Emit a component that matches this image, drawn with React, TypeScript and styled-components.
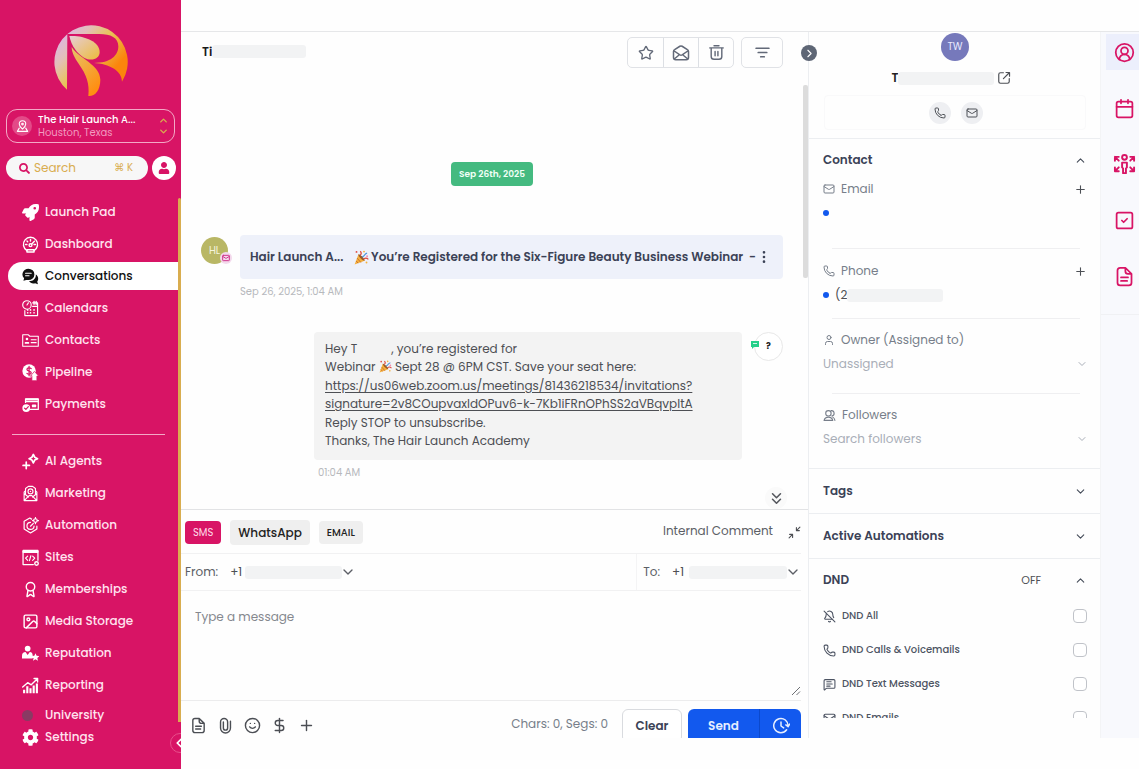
import React from "react";
import styled, { createGlobalStyle, css } from "styled-components";
import {
  Award, BellOff, Calendar, ChevronDown, ChevronLeft, ChevronRight, ChevronUp, ChevronsDown, CircleUserRound,
  DollarSign, EllipsisVertical, Image as ImageIcon, Mail, MessageSquareText,
  Phone, Plus, Smile, SquareCheck, Star, User,
} from "lucide-react";
import { FaRocket, FaSearch, FaUser, FaCog } from "react-icons/fa";

const c = {
  brand: "#d81465",
  gold: "#d9ad4f",
  ink: "#3b4256",
  text: "#4d4f54",
  muted: "#777e8a",
  faint: "#a9aeb8",
  line: "#eceef1",
  redact: "#f2f3f4",
  blue: "#1259ee",
};

const Global = createGlobalStyle`
  *, *::before, *::after { box-sizing: border-box; }
  body { margin: 0; background: #fefefe; }
  body, button, input, select, textarea { font-family: Poppins, Inter, "Liberation Sans", sans-serif; }
  button { cursor: pointer; }
  h2, p { margin: 0; }
`;

const Shell = styled.div`
  display: flex;
  height: 100vh;
  overflow: hidden;
  color: ${c.text};
`;

/* ---------- sidebar ---------- */

const Sidebar = styled.aside`
  position: relative;
  flex: 0 0 181px;
  display: flex;
  flex-direction: column;
  background: ${c.brand};
  overflow: hidden;
`;

const LogoArea = styled.div`
  display: flex;
  justify-content: center;
  padding: 23px 2px 11px 0;
`;

const Account = styled.button`
  display: flex;
  align-items: center;
  gap: 6px;
  height: 34px;
  margin: 0 6px;
  padding: 0 5px;
  border: 1px solid #f3a9c6;
  border-radius: 11px;
  background: transparent;
  color: #fff;
  text-align: left;
`;

const AccountIcon = styled.span`
  display: grid;
  place-items: center;
  width: 20px;
  height: 20px;
  border-radius: 50%;
  background: #e34a88;
`;

const AccountText = styled.span`
  flex: 1;
  display: flex;
  flex-direction: column;
  font-size: 10px;
  font-weight: 500;
  line-height: 13px;
  white-space: nowrap;
`;

const AccountPlace = styled.span`
  color: #f29cc0;
  font-weight: 400;
`;

const Sorter = styled.span`
  display: flex;
  flex-direction: column;
  color: ${c.gold};
`;

const SearchRow = styled.div`
  display: flex;
  gap: 4px;
  margin: 13px 5px 0 6px;
`;

const SearchBox = styled.label`
  flex: 1;
  min-width: 0;
  display: flex;
  align-items: center;
  gap: 4px;
  height: 24px;
  padding: 0 15px 0 13px;
  border-radius: 12px;
  background: #f7f7f7;
  color: ${c.brand};
`;

const SearchInput = styled.input`
  flex: 1;
  min-width: 0;
  padding: 0;
  border: 0;
  outline: 0;
  background: transparent;
  font-size: 12px;
  &::placeholder { color: ${c.gold}; opacity: 1; }
`;

const Shortcut = styled.span`
  color: ${c.gold};
  font-size: 10px;
`;

const ProfileButton = styled.button`
  display: grid;
  place-items: center;
  width: 24px;
  height: 24px;
  padding: 0;
  border: 0;
  border-radius: 50%;
  background: #fff;
  color: ${c.brand};
`;

const Nav = styled.nav<{ $top: number; $gap?: number }>`
  display: flex;
  flex-direction: column;
  gap: ${(p) => p.$gap ?? 4}px;
  margin-top: ${(p) => p.$top}px;
  padding-left: 8px;
`;

const NavItem = styled.a<{ $active?: boolean; $short?: boolean }>`
  display: flex;
  align-items: center;
  gap: 6px;
  height: ${(p) => (p.$short ? 22 : 28)}px;
  padding-left: 14px;
  border-radius: 14px 0 0 14px;
  color: #ffe3ef;
  font-size: 12px;
  font-weight: 500;
  text-decoration: none;
  ${(p) => p.$active && css`background: #fff; color: #111;`}
  svg { flex: none; width: 17px; height: 17px; color: ${(p) => (p.$active ? "#111" : "#fff")}; }
`;

const NavRule = styled.hr`
  width: 153px;
  height: 1px;
  margin: 16px 0 0 12px;
  border: 0;
  background: #f3a9c6;
`;

const Dot = styled.span<{ $size: number; $color: string }>`
  flex: none;
  width: ${(p) => p.$size}px;
  height: ${(p) => p.$size}px;
  border-radius: 50%;
  background: ${(p) => p.$color};
`;

const DotSlot = styled.span`
  width: 17px;
  display: flex;
`;

const SideStripe = styled.div`
  position: absolute;
  right: 0;
  top: 198px;
  bottom: 47px;
  width: 3px;
  border-radius: 2px 2px 0 0;
  background: ${c.gold};
`;

const CollapseButton = styled.button`
  position: absolute;
  right: -9px;
  bottom: 16px;
  display: grid;
  place-items: center;
  width: 20px;
  height: 20px;
  padding: 0 2px 0 0;
  border: 1px solid #e8508c;
  border-radius: 50%;
  background: ${c.brand};
  color: #fff;
`;

/* ---------- workspace ---------- */

const Workspace = styled.main`
  position: relative;
  flex: 1;
  min-width: 0;
  display: flex;
  margin: 31px 0;
  border-top: 1px solid #e6e7e9;
  overflow: hidden;
`;

const Conversation = styled.section`
  position: relative;
  flex: 1;
  min-width: 0;
  display: flex;
  flex-direction: column;
`;

const Header = styled.header`
  display: flex;
  align-items: flex-start;
  height: 53px;
  padding: 5px 25px 0 21px;
`;

const ContactName = styled.div`
  flex: 1;
  display: flex;
  align-items: center;
  height: 29px;
  color: #1a1a1a;
  font-size: 12px;
  font-weight: 600;
`;

const Redacted = styled.span<{ $w: number; $h?: number }>`
  display: block;
  width: ${(p) => p.$w}px;
  height: ${(p) => p.$h ?? 13}px;
  border-radius: 3px;
  background: ${c.redact};
`;

const ButtonGroup = styled.div`
  display: flex;
  margin-right: 7px;
  border: 1px solid #e0e2e6;
  border-radius: 5px;
`;

const ToolButton = styled.button<{ $solo?: boolean }>`
  display: grid;
  place-items: center;
  width: ${(p) => (p.$solo ? 42 : 35)}px;
  height: ${(p) => (p.$solo ? 31 : 29)}px;
  padding: 0;
  border: 0;
  background: transparent;
  color: #626978;
  & + & { border-left: 1px solid #dcdfe4; }
  ${(p) => p.$solo && css`border: 1px solid #e0e2e6; border-radius: 5px;`}
`;

const Messages = styled.div`
  position: relative;
  flex: 1;
  min-height: 0;
  overflow: hidden;
  padding: 77px 25px 0 20px;
`;

const ScrollThumb = styled.div`
  position: absolute;
  top: 0;
  right: 0;
  width: 5px;
  height: 193px;
  border-radius: 2px;
  background: #dcdcdc;
`;

const DayBadge = styled.div`
  display: flex;
  align-items: center;
  justify-content: center;
  width: 82px;
  height: 24px;
  margin: 0 auto 49px;
  border-radius: 4px;
  background: #44ba80;
  color: #f1fff7;
  font-size: 9px;
  font-weight: 600;
  white-space: nowrap;
`;

const Row = styled.div<{ $end?: boolean }>`
  display: flex;
  align-items: flex-start;
  justify-content: ${(p) => (p.$end ? "flex-end" : "flex-start")};
  gap: 12px;
`;

const Avatar = styled.div`
  position: relative;
  flex: none;
  display: grid;
  place-items: center;
  width: 27px;
  height: 27px;
  margin-top: 2px;
  border-radius: 50%;
  background: #b9b765;
  color: #f4f4de;
  font-size: 10px;
`;

const AvatarBadge = styled.span`
  position: absolute;
  right: -4px;
  bottom: 0;
  display: grid;
  place-items: center;
  width: 12px;
  height: 12px;
  border-radius: 50%;
  background: #f3d9ec;
  color: #d0358d;
`;

const Stack = styled.div<{ $w?: number }>`
  ${(p) => (p.$w ? css`flex: 0 1 ${p.$w}px;` : css`flex: 1;`)}
  min-width: 0;
`;

const EmailCard = styled.div`
  display: flex;
  align-items: center;
  height: 44px;
  padding: 0 11px 0 10px;
  border-radius: 4px;
  background: #eef1fa;
  color: ${c.ink};
  font-size: 12px;
  font-weight: 600;
  white-space: nowrap;
`;

const Sender = styled.span`
  flex: 0 0 104px;
`;

const Subject = styled.span`
  flex: 1;
  display: flex;
  align-items: center;
  gap: 2px;
`;

const PlainIcon = styled.button`
  display: grid;
  place-items: center;
  padding: 0;
  border: 0;
  background: transparent;
  color: inherit;
`;

const Stamp = styled.div<{ $indent?: boolean }>`
  margin-top: 6px;
  padding-left: ${(p) => (p.$indent ? 4 : 0)}px;
  color: #b7b9bd;
  font-size: 10px;
  line-height: 14px;
`;

const Spacer = styled.div<{ $h: number }>`
  height: ${(p) => p.$h}px;
`;

const Bubble = styled.div`
  display: flex;
  flex-direction: column;
  gap: 1px;
  padding: 8px 12px 10px 11px;
  border-radius: 4px;
  background: #f3f3f3;
  color: ${c.text};
  font-size: 12px;
  line-height: 18px;
  white-space: nowrap;
  a { color: inherit; text-underline-offset: 2px; }
  svg { vertical-align: -2px; }
`;

const NameGap = styled.span`
  display: inline-block;
  width: 34px;
`;

const AskAvatar = styled.div`
  position: relative;
  flex: none;
  display: grid;
  place-items: center;
  width: 29px;
  height: 29px;
  border: 1px solid #e8e8e8;
  border-radius: 50%;
  background: #fff;
  color: #222;
  font-size: 9px;
  font-weight: 700;
  svg { position: absolute; left: -5px; top: 7px; }
`;

const JumpDown = styled.button`
  position: absolute;
  right: 21px;
  bottom: 0;
  display: grid;
  place-items: center;
  width: 22px;
  height: 22px;
  padding: 0;
  border: 0;
  border-radius: 50%;
  background: #fafafa;
  color: #55585e;
`;

/* ---------- composer ---------- */

const Composer = styled.form`
  flex: none;
  border-top: 1px solid #e2e3e5;
`;

const ComposerRow = styled.div<{ $h: number; $top?: number }>`
  display: flex;
  align-items: center;
  height: ${(p) => p.$h}px;
  margin-right: 7px;
  padding: ${(p) => p.$top ?? 0}px 0 0 4px;
  border-bottom: 1px solid #f1f1f2;
  white-space: nowrap;
`;

const Channel = styled.button<{ $active?: boolean; $large?: boolean }>`
  height: ${(p) => (p.$large ? 25 : 23)}px;
  margin-right: 9px;
  padding: 0 8px;
  border: 0;
  border-radius: 4px;
  background: ${(p) => (p.$active ? c.brand : "#efefef")};
  color: ${(p) => (p.$active ? "#ffd9e8" : "#222")};
  font-size: ${(p) => (p.$large ? 12 : 10)}px;
  font-weight: ${(p) => (p.$active ? 400 : 500)};
`;

const CommentLink = styled.button`
  margin: 0 15px 0 auto;
  padding: 0 0 4px;
  border: 0;
  background: transparent;
  color: #5c5f66;
  font-size: 12px;
`;

const NumberField = styled.label<{ $end?: boolean }>`
  display: flex;
  align-items: center;
  gap: 12px;
  height: 100%;
  font-size: 12px;
  color: #5c5f66;
  ${(p) => p.$end && css`margin-left: auto; padding-left: 6px; border-left: 1px solid #f4f4f5;`}
`;

const SelectWrap = styled.span<{ $w?: number }>`
  position: relative;
  display: flex;
  align-items: center;
  ${(p) => (p.$w ? css`width: ${p.$w}px;` : css`width: 100%;`)}
  svg { position: absolute; right: 0; pointer-events: none; }
`;

const Select = styled.select<{ $muted?: boolean }>`
  width: 100%;
  padding: 0;
  border: 0;
  outline: 0;
  appearance: none;
  background: transparent;
  color: ${(p) => (p.$muted ? c.faint : c.text)};
  font-size: 12px;
  line-height: 18px;
`;

const SelectMask = styled(Redacted)`
  position: absolute;
  right: 14px;
  pointer-events: none;
`;

const MessageBox = styled.textarea`
  display: block;
  width: 100%;
  height: 109px;
  padding: 17px 14px;
  border: 0;
  outline: 0;
  resize: none;
  background: transparent;
  font-size: 12px;
  line-height: 18px;
  &::placeholder { color: #85888e; opacity: 1; }
`;

const MessageBoxWrap = styled.div`
  position: relative;
  margin-right: 7px;
  border-bottom: 1px solid #ececed;
  svg { position: absolute; right: 0; bottom: 4px; }
`;

const Actions = styled.div`
  display: flex;
  align-items: flex-start;
  height: 37px;
  padding: 8px 7px 0 9px;
  overflow: hidden;
`;

const ActionIcons = styled.div`
  display: flex;
  gap: 10px;
  padding-top: 8px;
  color: #4b4e54;
`;

const Counter = styled.span`
  margin: 6px 14px 0 auto;
  color: ${c.muted};
  font-size: 12px;
  line-height: 18px;
`;

const ClearButton = styled.button`
  width: 60px;
  height: 34px;
  margin-right: 6px;
  border: 1px solid #d9dbdf;
  border-radius: 6px;
  background: #fff;
  color: ${c.ink};
  font-size: 12px;
  font-weight: 600;
`;

const SendGroup = styled.div`
  display: flex;
  border-radius: 6px;
  overflow: hidden;
`;

const SendButton = styled.button<{ $w: number }>`
  display: grid;
  place-items: center;
  width: ${(p) => p.$w}px;
  height: 34px;
  padding: 0;
  border: 0;
  background: ${c.blue};
  color: #e6eeff;
  font-size: 12px;
  font-weight: 600;
  & + & { border-left: 1px solid #0b49cd; }
`;

/* ---------- contact panel ---------- */

const Panel = styled.aside`
  position: relative;
  flex: 0 0 293px;
  display: flex;
  flex-direction: column;
  border-left: 1px solid ${c.line};
  border-right: 1px solid #f3f4f6;
`;

const PanelScroll = styled.div`
  flex: 1;
  min-height: 0;
  margin-bottom: 20px;
  overflow: hidden;
`;

const PanelToggle = styled.button`
  position: absolute;
  left: -8px;
  top: 13px;
  display: grid;
  place-items: center;
  width: 16px;
  height: 16px;
  padding: 0;
  border: 0;
  border-radius: 50%;
  background: #5e6675;
  color: #fff;
`;

const Summary = styled.div`
  display: flex;
  flex-direction: column;
  align-items: center;
  height: 106px;
  padding: 1px 14px 0 15px;
`;

const Initials = styled.div`
  display: grid;
  place-items: center;
  width: 28px;
  height: 28px;
  border-radius: 50%;
  background: #7679bb;
  color: #e9eaff;
  font-size: 10px;
`;

const NameRow = styled.div`
  display: flex;
  align-items: center;
  height: 34px;
  padding-right: 7px;
  color: #222;
  font-size: 12px;
  font-weight: 600;
  svg { margin-left: 3px; color: #4d5056; }
`;

const ContactActions = styled.div`
  display: flex;
  justify-content: center;
  align-items: center;
  gap: 10px;
  width: 100%;
  height: 35px;
  padding-left: 2px;
  border: 1px solid #f9f9fa;
  border-radius: 4px;
`;

const RoundButton = styled.button`
  display: grid;
  place-items: center;
  width: 22px;
  height: 22px;
  padding: 0;
  border: 0;
  border-radius: 50%;
  background: #eeeff2;
  color: #4d5056;
`;

const Section = styled.section`
  padding: 0 12px 0 14px;
  border-top: 1px solid ${c.line};
`;

const SectionHead = styled.div<{ $open?: boolean }>`
  display: flex;
  align-items: center;
  justify-content: space-between;
  height: ${(p) => (p.$open ? 38 : 44)}px;
  padding: ${(p) => (p.$open ? 4 : 0)}px 1px 0 0;
  color: #444b58;
`;

const SectionTitle = styled.h2`
  flex: 1;
  color: ${c.ink};
  font-size: 12px;
  font-weight: 600;
`;

const State = styled.span`
  margin-right: 33px;
  color: ${c.text};
  font-size: 11px;
`;

const Field = styled.div<{ $h: number; $last?: boolean }>`
  position: relative;
  height: ${(p) => p.$h}px;
  font-size: 12px;
  &::after {
    content: ${(p) => (p.$last ? "none" : '""')};
    position: absolute;
    left: 9px;
    right: 8px;
    bottom: 0;
    border-bottom: 1px solid #efeff1;
  }
`;

const FieldHead = styled.div`
  display: flex;
  align-items: center;
  gap: 6px;
  height: 24px;
  padding-right: 1px;
  color: ${c.muted};
  & > :nth-child(2) { flex: 1; }
  button { color: #4d5056; }
`;

const FieldValue = styled.div`
  display: flex;
  align-items: center;
  height: 24px;
`;

const ValueText = styled.span`
  padding-left: 6px;
`;

const DndList = styled.div`
  padding-top: 2px;
`;

const DndRow = styled.label`
  display: flex;
  align-items: center;
  gap: 6px;
  height: 34px;
  color: #4d5463;
  font-size: 10px;
  font-weight: 500;
`;

const Tick = styled.input`
  width: 14px;
  height: 14px;
  margin: 0 1px 0 auto;
  appearance: none;
  border: 1px solid #c0c3c9;
  border-radius: 4px;
  background: #fff;
  &:checked { background: ${c.blue}; }
`;

/* ---------- right rail ---------- */

const Rail = styled.nav`
  flex: 0 0 38px;
  background: #f8f9fd;
`;

const RailGroup = styled.div`
  display: flex;
  flex-direction: column;
  gap: 20px;
  padding: 2px 0 20px 5px;
  border-bottom: 1px solid #f0f1f4;
`;

const RailButton = styled.button<{ $active?: boolean }>`
  display: grid;
  place-items: center;
  height: 36px;
  padding: 0 0 0 4px;
  border: 0;
  background: ${(p) => (p.$active ? "#eceffc" : "transparent")};
  color: ${c.brand};
`;

/* ---------- drawings ---------- */

const Logo = () => (
  <svg width="76" height="75" viewBox="158 68 228 225" role="img" aria-label="R logo">
    <defs>
      <linearGradient id="logo" gradientUnits="userSpaceOnUse" x1="190" y1="90" x2="360" y2="240">
        <stop offset="0" stopColor="#dcb4e8" />
        <stop offset="0.25" stopColor="#e3bfb8" />
        <stop offset="0.5" stopColor="#e8c458" />
        <stop offset="0.85" stopColor="#fb850c" />
      </linearGradient>
      <linearGradient id="leaf" x1="0" y1="0" x2="1" y2="1">
        <stop offset="0" stopColor="#e6cdd8" />
        <stop offset="1" stopColor="#ecbb3a" />
      </linearGradient>
      <linearGradient id="leg" x1="0" y1="0" x2="0.6" y2="1">
        <stop offset="0" stopColor="#e6c46a" />
        <stop offset="1" stopColor="#ff8f12" />
      </linearGradient>
    </defs>
    <path fill="url(#logo)" d="M203 268A110 110 0 1 1 368 244C368 212 330 190 284 188C334 188 357 166 357 138C357 112 334 101 300 101H204Z" />
    <path fill="url(#leaf)" d="M210 107C250 104 301 122 301 155C301 176 276 184 254 172C234 161 216 136 210 107Z" />
    <path fill="url(#leg)" d="M217 140C240 176 302 192 303 238C303 270 286 289 267 287C271 250 262 224 238 190C226 173 217 156 217 140Z" />
  </svg>
);

const Svg = ({ children, size = 17 }: { children: React.ReactNode; size?: number }) => (
  <svg width={size} height={size} viewBox="0 0 24 24" fill="none" stroke="currentColor" strokeWidth="2" strokeLinecap="round" strokeLinejoin="round" aria-hidden="true">
    {children}
  </svg>
);

const DashboardIcon = () => (
  <Svg><path d="M7 20.500a10 10 0 1 1 10 0" /><path d="M7 22.500h10v-3H7z" /><circle cx="12" cy="13" r="2" /><path d="m13.500 11.500 4-4M5 12h2M17 12h2M12 5v2M7 7l1 1" /></Svg>
);
const ChatIcon = () => (
  <Svg>
    <path fill="currentColor" stroke="none" d="M9 1a8.500 8 0 0 0-6 13.500L2 18l4-1a9 8 0 0 0 3 0 8.500 8 0 0 0 0-16z" />
    <path fill="currentColor" stroke="none" d="M19.500 9c3.500 2 4.500 7 2 10l1 4-4-1.500c-4 1-7-.5-8.500-3 6 0 10-4 9.500-9.500z" />
    <path stroke="#fff" strokeWidth="1.500" d="M5 7.500h8M5 11h5" />
  </Svg>
);
const CalendarsIcon = () => (
  <Svg><circle cx="7" cy="7" r="6" strokeWidth="1.600" /><path strokeWidth="1.600" d="M7 7l2-3M15 4h7v18H4v-7M15 9h7" /><path d="M17 2v4M20 2v4" /><path strokeWidth="2.400" d="M8 14h.01M12 14h.01M17 14h.01M8 18h.01M12 18h.01M17 18h.01" /></Svg>
);
const CardIcon = () => (
  <Svg><path strokeWidth="1.500" d="M1 4h8l2 2h12v14H1z" /><circle cx="7" cy="10" r="1.800" fill="currentColor" stroke="none" /><path strokeWidth="2.500" d="M5 15.500h4" /><path strokeWidth="1.600" d="M13 11h7M13 15h7" /></Svg>
);
const PipelineIcon = () => (
  <Svg>
    <circle cx="10" cy="10" r="9.500" fill="currentColor" stroke="none" />
    <path stroke={c.brand} strokeWidth="1.800" d="M13 6.500c-2-2-6-1-6 1.200 0 3 6 1.500 6 4.500 0 2.300-4 3-6 1M10 3.500v13" />
    <path fill="currentColor" stroke={c.brand} strokeWidth="1" d="M12 17l5.500-6.500 6 6.500h-2.500v6.500h-7V17z" />
  </Svg>
);
const PaymentsIcon = () => (
  <Svg><path strokeWidth="1.800" d="M5 9V4h18v15H12M5 8h18" /><path strokeWidth="3" d="M6 5h16" /><circle cx="6" cy="17" r="5.500" fill="currentColor" stroke="none" /><path stroke={c.brand} strokeWidth="1.600" d="m3.500 17 2 2 3.500-4" /><path d="M15 13h4v2h-4z" /></Svg>
);
const AgentsIcon = () => (
  <Svg><path strokeWidth="2.400" d="m16 2 2 4 4 2-4 2-2 4-2-4-4-2 4-2z" /><path strokeWidth="2.400" d="M6 13v9M1.500 17.500h9" /></Svg>
);
const MarketingIcon = () => (
  <Svg><path strokeWidth="1.600" d="M3 10v12h18V10l-2-2M3 10l2-2M5 12V5l4-3h6l4 3v7M3 22l7-7h4l7 7M3 12l6 5M21 12l-6 5" /><circle cx="12" cy="9" r="3.500" strokeWidth="1.600" /><path d="M12 9h.01" /></Svg>
);
const AutomationIcon = () => (
  <Svg><path strokeWidth="1.700" d="M13.500 3 11 1.500 3 6v11l9 5.500 9-5.500v-4" /><path strokeWidth="1.700" d="M12 7.500a5 5 0 1 0 5 5.500M12 13l4-4" /><circle cx="19" cy="5" r="2.500" strokeWidth="1.700" /><path strokeWidth="1.700" d="M19 .8v1.500M19 8v1.500M14.800 5h1.500M21.800 5h1.500" /></Svg>
);
const SitesIcon = () => (
  <Svg><path strokeWidth="1.800" d="M1.500 2h21v14M1.500 2v20H16" /><path strokeWidth="3" d="M2 4h20" /><path strokeWidth="1.600" d="m8 10-3 3 3 3M15 10l3 3-3 3M12.500 9.500l-2 7" /><circle cx="20.500" cy="20.500" r="2.500" /></Svg>
);
const ReputationIcon = () => (
  <Svg>
    <circle cx="8" cy="5" r="4" fill="currentColor" stroke="none" />
    <path fill="currentColor" stroke="none" d="M0 19v-4c0-3 2-5 5-5l3 4 3-4c3 0 4 2 4 5v4zM19 11.500l1.600 3.700 4 .4-3 2.700.9 4-3.500-2.100-3.500 2.100.9-4-3-2.700 4-.4z" />
  </Svg>
);
const ReportingIcon = () => (
  <Svg><path d="M1 14l7-6 5 3 9-9M17 2h5v5" /><path strokeWidth="3" strokeLinecap="butt" d="M3 23v-5M7.500 23V13M12 23v-7M16.500 23V12M21 23V9" /></Svg>
);
const LocationIcon = () => (
  <Svg size={13}><path d="M12 17s6-5 6-9.500a6 6 0 0 0-12 0C6 12 12 17 12 17z" /><circle cx="12" cy="7.500" r="1.500" /><path d="M6 15l-3.500 6h19L18 15" /></Svg>
);
const OpenIcon = () => (
  <Svg size={14}><path d="M11 3H6a3 3 0 0 0-3 3v12a3 3 0 0 0 3 3h12a3 3 0 0 0 3-3v-5M11 13 21 3M15.500 2.500h6V9" /></Svg>
);
const CollapseIcon = () => (
  <Svg size={13}><path d="M22 2l-6 6M15.500 3v5.500H21M2 22l6-6M3 15.500h5.500V21" /></Svg>
);
const FilterIcon = () => (
  <Svg size={17}><path strokeWidth="2.400" d="M3 6h18M6 12h12M9.500 18h5" /></Svg>
);
const OpenMailIcon = () => (
  <Svg size={18}><path d="M2 10v8a3 3 0 0 0 3 3h14a3 3 0 0 0 3-3v-8a3 3 0 0 0-1.500-2.500l-7-4.500a3 3 0 0 0-3 0l-7 4.500A3 3 0 0 0 2 10zM2.500 9l8 5.500a3 3 0 0 0 3 0l8-5.500M3 20l6-5M21 20l-6-5" /></Svg>
);
const BinIcon = () => (
  <Svg size={17}><path d="M2.500 5.500h19M8.500 2.500h7M4.500 5.500v12a4 4 0 0 0 4 4h7a4 4 0 0 0 4-4v-12M10 10.500v6M14 10.500v6" /></Svg>
);
const DocIcon = ({ size = 17 }: { size?: number }) => (
  <Svg size={size}><path d="M13 2H7a3 3 0 0 0-3 3v14a3 3 0 0 0 3 3h10a3 3 0 0 0 3-3V9zM13 2v4a3 3 0 0 0 3 3h4M8 13h8M8 17h7" /></Svg>
);
const ClipIcon = () => (
  <Svg size={17}><path d="M19 6v9.500a7 7 0 0 1-14 0V7a5 5 0 0 1 10 0v8.500a3 3 0 0 1-6 0V7" /></Svg>
);
const FollowersIcon = () => (
  <Svg size={13}><circle cx="10" cy="8" r="5" /><path d="M2 21c1-4 4-6 8-6s7 2 8 6zM15 3a5 5 0 0 1 1 10M18 15c2 1 3.500 3 4 6" /></Svg>
);
const TeamIcon = () => (
  <Svg size={23}>
    <circle cx="12" cy="4.500" r="2.500" />
    <path d="M9.500 10h5v5l-1 1v5h-3v-5l-1-1zM2 4l4 4M2 8V4h4M22 4l-4 4M18 4h4v4M2 19l4-4M2 15v4h4M22 19l-4-4M22 15v4h-4" />
  </Svg>
);
const ClockIcon = () => (
  <Svg size={18}><path d="M19.500 17a9.500 9.500 0 1 1 1.800-5M12 6.500V12l3.500 2.500M18.500 10.500l3 2.500 2-3.500" /></Svg>
);
const ResizeMark = () => (
  <svg width="10" height="10" viewBox="0 0 10 10" stroke="#6d6f74" strokeWidth="1" aria-hidden="true"><path d="M1 9 9 1M5.500 9 9 5.500" /></svg>
);
const SmsMark = () => (
  <svg width="10" height="10" viewBox="0 0 10 10" aria-hidden="true"><path fill="#25d08a" d="M1 1h8v6H4L2 9V7H1z" /><path stroke="#fff" strokeWidth="0.800" d="M3 3.500h4" /></svg>
);
const Party = ({ size = 14 }: { size?: number }) => (
  <svg width={size} height={size} viewBox="0 0 24 24" role="img" aria-label="Party popper">
    <path fill="#f5b13d" d="M1 23 7 7c4 1 8 5 10 10z" />
    <path stroke="#c96d2b" strokeWidth="1.500" d="m5 13 6 7M3.500 17.500l3 3.500" />
    <path fill="#9a5a2a" d="M7 7c1-2 11 7 10 10-3 0-10-6-10-10z" />
    <path fill="none" stroke="#e0483e" strokeWidth="2" d="M10 8c2-2 2-4 0-6M16 14c3-2 5-1 7 1" />
    <path fill="none" stroke="#4d94db" strokeWidth="2" d="M13 11c5-1 3-5 8-6" />
    <circle cx="4" cy="3" r="1.500" fill="#e0483e" /><circle cx="16" cy="2.500" r="1.500" fill="#f5b13d" /><circle cx="21" cy="10" r="1.500" fill="#f08ab0" /><circle cx="20" cy="20" r="1.500" fill="#f5b13d" />
  </svg>
);

const primary: [string, React.ReactNode][] = [
  ["Launch Pad", <FaRocket />],
  ["Dashboard", <DashboardIcon />],
  ["Conversations", <ChatIcon />],
  ["Calendars", <CalendarsIcon />],
  ["Contacts", <CardIcon />],
  ["Pipeline", <PipelineIcon />],
  ["Payments", <PaymentsIcon />],
];

const secondary: [string, React.ReactNode][] = [
  ["AI Agents", <AgentsIcon />],
  ["Marketing", <MarketingIcon />],
  ["Automation", <AutomationIcon />],
  ["Sites", <SitesIcon />],
  ["Memberships", <Award />],
  ["Media Storage", <ImageIcon />],
  ["Reputation", <ReputationIcon />],
  ["Reporting", <ReportingIcon />],
];

const dnd: [string, React.ReactNode][] = [
  ["DND All", <BellOff size={13} />],
  ["DND Calls & Voicemails", <Phone size={13} />],
  ["DND Text Messages", <MessageSquareText size={13} />],
  ["DND Emails", <Mail size={13} />],
];

export default function App() {
  return (
    <Shell>
      <Global />
      <Sidebar>
        <LogoArea><Logo /></LogoArea>
        <Account type="button">
          <AccountIcon><LocationIcon /></AccountIcon>
          <AccountText>
            The Hair Launch A...
            <AccountPlace>Houston, Texas</AccountPlace>
          </AccountText>
          <Sorter><ChevronUp size={11} strokeWidth={3} /><ChevronDown size={11} strokeWidth={3} /></Sorter>
        </Account>
        <SearchRow>
          <SearchBox>
            <FaSearch size={11} />
            <SearchInput placeholder="Search" aria-label="Search" />
            <Shortcut>⌘ K</Shortcut>
          </SearchBox>
          <ProfileButton type="button" aria-label="Profile"><FaUser size={12} /></ProfileButton>
        </SearchRow>
        <Nav $top={18}>
          {primary.map(([label, icon]) => (
            <NavItem key={label} href="#" $active={label === "Conversations"}>{icon}{label}</NavItem>
          ))}
        </Nav>
        <NavRule />
        <Nav $top={12}>
          {secondary.map(([label, icon]) => (
            <NavItem key={label} href="#">{icon}{label}</NavItem>
          ))}
        </Nav>
        <Nav $top={5} $gap={0}>
          <NavItem href="#" $short><DotSlot><Dot $size={11} $color="#8a3a63" /></DotSlot>University</NavItem>
          <NavItem href="#" $short><FaCog />Settings</NavItem>
        </Nav>
        <SideStripe />
        <CollapseButton type="button" aria-label="Collapse sidebar"><ChevronLeft size={14} strokeWidth={3} /></CollapseButton>
      </Sidebar>

      <Workspace>
        <Conversation>
          <Header>
            <ContactName>Ti<Redacted $w={94} /></ContactName>
            <ButtonGroup>
              <ToolButton type="button" aria-label="Star"><Star size={16} /></ToolButton>
              <ToolButton type="button" aria-label="Mark as read"><OpenMailIcon /></ToolButton>
              <ToolButton type="button" aria-label="Delete"><BinIcon /></ToolButton>
            </ButtonGroup>
            <ToolButton type="button" $solo aria-label="Filter"><FilterIcon /></ToolButton>
          </Header>

          <Messages>
            <DayBadge>Sep 26th, 2025</DayBadge>
            <Row>
              <Avatar>HL<AvatarBadge><Mail size={8} strokeWidth={3} /></AvatarBadge></Avatar>
              <Stack>
                <EmailCard>
                  <Sender>Hair Launch A...</Sender>
                  <Subject><Party size={15} />You’re Registered for the Six-Figure Beauty Business Webinar</Subject>
                  <span>-</span>
                  <PlainIcon type="button" aria-label="More"><EllipsisVertical size={16} /></PlainIcon>
                </EmailCard>
                <Stamp>Sep 26, 2025, 1:04 AM</Stamp>
              </Stack>
            </Row>
            <Spacer $h={33} />
            <Row $end>
              <Stack $w={428}>
                <Bubble>
                  <p>Hey T<NameGap />, you’re registered for<br />Webinar <Party size={13} /> Sept 28 @ 6PM CST. Save your seat here:</p>
                  <p>
                    <a href="#">https://us06web.zoom.us/meetings/81436218534/invitations?<br />signature=2v8COupvaxldOPuv6-k-7Kb1iFRnOPhSS2aVBqvpItA</a>
                  </p>
                  <p>Reply STOP to unsubscribe.<br />Thanks, The Hair Launch Academy</p>
                </Bubble>
                <Stamp $indent>01:04 AM</Stamp>
              </Stack>
              <AskAvatar>?<SmsMark /></AskAvatar>
            </Row>
            <ScrollThumb />
            <JumpDown type="button" aria-label="Jump to latest"><ChevronsDown size={19} /></JumpDown>
          </Messages>

          <Composer onSubmit={(e) => e.preventDefault()}>
            <ComposerRow $h={44} $top={2}>
              <Channel type="button" $active>SMS</Channel>
              <Channel type="button" $large>WhatsApp</Channel>
              <Channel type="button">EMAIL</Channel>
              <CommentLink type="button">Internal Comment</CommentLink>
              <PlainIcon type="button" aria-label="Minimize"><CollapseIcon /></PlainIcon>
            </ComposerRow>
            <ComposerRow $h={37}>
              <NumberField>
                From:
                <SelectWrap $w={126}>
                  <Select><option>+1</option></Select>
                  <SelectMask $w={97} />
                  <ChevronDown size={16} />
                </SelectWrap>
              </NumberField>
              <NumberField $end>
                To:
                <SelectWrap $w={129}>
                  <Select><option>+1</option></Select>
                  <SelectMask $w={98} />
                  <ChevronDown size={16} />
                </SelectWrap>
              </NumberField>
            </ComposerRow>
            <MessageBoxWrap>
              <MessageBox placeholder="Type a message" aria-label="Message" />
              <ResizeMark />
            </MessageBoxWrap>
            <Actions>
              <ActionIcons>
                <PlainIcon type="button" aria-label="Template"><DocIcon /></PlainIcon>
                <PlainIcon type="button" aria-label="Attach"><ClipIcon /></PlainIcon>
                <PlainIcon type="button" aria-label="Emoji"><Smile size={17} /></PlainIcon>
                <PlainIcon type="button" aria-label="Payment"><DollarSign size={17} /></PlainIcon>
                <PlainIcon type="button" aria-label="More actions"><Plus size={17} /></PlainIcon>
              </ActionIcons>
              <Counter>Chars: 0, Segs: 0</Counter>
              <ClearButton type="button">Clear</ClearButton>
              <SendGroup>
                <SendButton type="submit" $w={71}>Send</SendButton>
                <SendButton type="button" $w={42} aria-label="Schedule"><ClockIcon /></SendButton>
              </SendGroup>
            </Actions>
          </Composer>
        </Conversation>

        <Panel>
          <PanelScroll>
            <Summary>
              <Initials>TW</Initials>
              <NameRow>T<Redacted $w={96} /><OpenIcon /></NameRow>
              <ContactActions>
                <RoundButton type="button" aria-label="Call"><Phone size={12} /></RoundButton>
                <RoundButton type="button" aria-label="Email"><Mail size={12} /></RoundButton>
              </ContactActions>
            </Summary>
            <Section>
              <SectionHead $open>
                <SectionTitle>Contact</SectionTitle>
                <ChevronUp size={13} />
              </SectionHead>
              <Field $h={72}>
                <FieldHead>
                  <Mail size={12} /><span>Email</span>
                  <PlainIcon type="button" aria-label="Add email"><Plus size={13} /></PlainIcon>
                </FieldHead>
                <FieldValue><Dot $size={6} $color={c.blue} /></FieldValue>
              </Field>
              <Spacer $h={10} />
              <Field $h={60}>
                <FieldHead>
                  <Phone size={12} /><span>Phone</span>
                  <PlainIcon type="button" aria-label="Add phone"><Plus size={13} /></PlainIcon>
                </FieldHead>
                <FieldValue><Dot $size={6} $color={c.blue} /><ValueText>(2</ValueText><Redacted $w={96} /></FieldValue>
              </Field>
              <Spacer $h={9} />
              <Field $h={66}>
                <FieldHead as="label" htmlFor="owner"><User size={12} /><span>Owner (Assigned to)</span></FieldHead>
                <FieldValue>
                  <SelectWrap>
                    <Select id="owner" $muted><option>Unassigned</option></Select>
                    <ChevronDown size={12} color={c.faint} />
                  </SelectWrap>
                </FieldValue>
              </Field>
              <Spacer $h={9} />
              <Field $h={65} $last>
                <FieldHead as="label" htmlFor="followers"><FollowersIcon /><span>Followers</span></FieldHead>
                <FieldValue>
                  <SelectWrap>
                    <Select id="followers" $muted><option>Search followers</option></Select>
                    <ChevronDown size={12} color={c.faint} />
                  </SelectWrap>
                </FieldValue>
              </Field>
            </Section>
            <Section><SectionHead><SectionTitle>Tags</SectionTitle><ChevronDown size={13} /></SectionHead></Section>
            <Section><SectionHead><SectionTitle>Active Automations</SectionTitle><ChevronDown size={13} /></SectionHead></Section>
            <Section>
              <SectionHead $open><SectionTitle>DND</SectionTitle><State>OFF</State><ChevronUp size={13} /></SectionHead>
              <DndList>
                {dnd.map(([label, icon]) => (
                  <DndRow key={label}>{icon}{label}<Tick type="checkbox" /></DndRow>
                ))}
              </DndList>
            </Section>
          </PanelScroll>
          <PanelToggle type="button" aria-label="Hide contact panel"><ChevronRight size={13} /></PanelToggle>
        </Panel>

        <Rail>
          <RailGroup>
            <RailButton type="button" $active aria-label="Contact details"><CircleUserRound size={21} /></RailButton>
            <RailButton type="button" aria-label="Appointments"><Calendar size={21} /></RailButton>
            <RailButton type="button" aria-label="Opportunities"><TeamIcon /></RailButton>
            <RailButton type="button" aria-label="Tasks"><SquareCheck size={21} /></RailButton>
            <RailButton type="button" aria-label="Documents"><DocIcon size={21} /></RailButton>
          </RailGroup>
        </Rail>
      </Workspace>
    </Shell>
  );
}
